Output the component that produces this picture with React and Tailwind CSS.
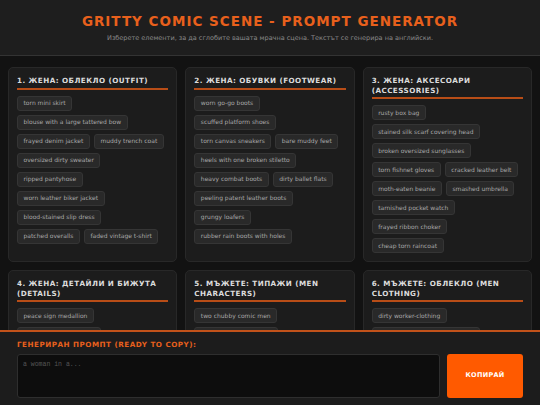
import { useState } from "react";

const sections = [
    {
        title: "1. ЖЕНА: ОБЛЕКЛО (OUTFIT)",
        items: [
            "torn mini skirt",
            "blouse with a large tattered bow",
            "frayed denim jacket",
            "muddy trench coat",
            "oversized dirty sweater",
            "ripped pantyhose",
            "worn leather biker jacket",
            "blood-stained slip dress",
            "patched overalls",
            "faded vintage t-shirt",
        ],
    },
    {
        title: "2. ЖЕНА: ОБУВКИ (FOOTWEAR)",
        items: [
            "worn go-go boots",
            "scuffed platform shoes",
            "torn canvas sneakers",
            "bare muddy feet",
            "heels with one broken stiletto",
            "heavy combat boots",
            "dirty ballet flats",
            "peeling patent leather boots",
            "grungy loafers",
            "rubber rain boots with holes",
        ],
    },
    {
        title: "3. ЖЕНА: АКСЕСОАРИ (ACCESSORIES)",
        items: [
            "rusty box bag",
            "stained silk scarf covering head",
            "broken oversized sunglasses",
            "torn fishnet gloves",
            "cracked leather belt",
            "moth-eaten beanie",
            "smashed umbrella",
            "tarnished pocket watch",
            "frayed ribbon choker",
            "cheap torn raincoat",
        ],
    },
    {
        title: "4. ЖЕНА: ДЕТАЙЛИ И БИЖУТА (DETAILS)",
        items: [
            "peace sign medallion",
            "cracked plastic bangles",
            "mismatched clip-on earrings",
            "chipped nail polish",
        ],
    },
    {
        title: "5. МЪЖЕТЕ: ТИПАЖИ (MEN CHARACTERS)",
        items: [
            "two chubby comic men",
            "lanky man in a tank top",
            "bald bouncer with a scarred face",
            "tired street vendor",
        ],
    },
    {
        title: "6. МЪЖЕТЕ: ОБЛЕКЛО (MEN CLOTHING)",
        items: [
            "dirty worker-clothing",
            "oil-stained undershirt and jeans",
            "greasy overalls",
            "worn flannel shirt",
        ],
    },
];

function Section({ title, items, picked, onPick }) {
    return (
        <div className="bg-[#1c1c1c] border border-[#282828] rounded-[5px] px-[8px] pt-[8px] pb-[8px]">

            {/* TITLE */}
            <h2 className="text-[7.2px] font-bold tracking-[0.45px] leading-[9.5px] text-[#dcdcdc] pb-[2px] border-b-2 border-[#b84d17] mb-[6px]">
                {title}
            </h2>

            {/* CHIPS */}
            <div className="flex flex-wrap gap-[4px] pr-[2px]">
                {items.map((item) => (
                    <button
                        key={item}
                        onClick={() => onPick(item)}
                        className={
                            picked.includes(item)
                                ? "h-[15px] px-[5.5px] rounded-[3px] bg-[#ff5a00] border border-[#ff5a00] text-[6px] text-white leading-none whitespace-nowrap"
                                : "h-[15px] px-[5.5px] rounded-[3px] bg-[#292929] border border-[#353535] text-[6px] text-[#a8a8a8] leading-none whitespace-nowrap"
                        }
                    >
                        {item}
                    </button>
                ))}
            </div>

        </div>
    );
}

export default function App() {

    const [picked, setPicked] = useState([]);

    const togglePick = (item) => {
        setPicked((prev) =>
            prev.includes(item) ? prev.filter((p) => p !== item) : [...prev, item]
        );
    };

    const prompt = picked.length ? "a woman in " + picked.join(", ") : "";

    return (
        <div className="min-h-screen bg-[#121212] font-['DejaVu_Sans',Verdana,sans-serif]">

            {/* HEADER */}
            <header className="h-[56px] bg-[#1e1e1e] border-b border-[#333] flex flex-col items-center pt-[15px]">
                <h1 className="text-[13.5px] font-bold tracking-[1px] text-[#e8601c] leading-none">
                    GRITTY COMIC SCENE - PROMPT GENERATOR
                </h1>
                <p className="text-[6.5px] leading-[9.75px] text-[#8a8a8a] mt-[5.5px]">
                    Изберете елементи, за да сглобите вашата мрачна сцена. Текстът се генерира на английски.
                </p>
            </header>

            {/* GRID */}
            <main className="grid grid-cols-3 gap-2 px-2 pt-[11px] pb-[90px]">
                {sections.map((s) => (
                    <Section key={s.title} {...s} picked={picked} onPick={togglePick} />
                ))}
            </main>

            {/* OUTPUT PANEL */}
            <div className="fixed bottom-0 left-0 right-0 h-[75px] bg-[#1c1c1c] border-t-2 border-[#c2521a] px-[17px] pt-[9px]">
                <div className="text-[7.2px] font-bold tracking-[0.5px] text-[#e8601c] leading-none">
                    ГЕНЕРИРАН ПРОМПТ (READY TO COPY):
                </div>
                <div className="flex gap-[7px] mt-[6px]">
                    <textarea
                        readOnly
                        value={prompt}
                        placeholder="a woman in a..."
                        className="flex-1 h-[44px] resize-none bg-[#0d0d0d] border border-[#2e2e2e] rounded-[3px] px-[5px] py-[5px] text-[6.5px] font-['Liberation_Mono',monospace] text-[#ccc] placeholder:text-[#555] focus:outline-none"
                    />
                    <button className="w-[76px] h-[44px] bg-[#ff5a00] rounded-[3px] text-white font-bold text-[6.5px] tracking-[0.3px]">
                        КОПИРАЙ
                    </button>
                </div>
            </div>

        </div>
    );
}
